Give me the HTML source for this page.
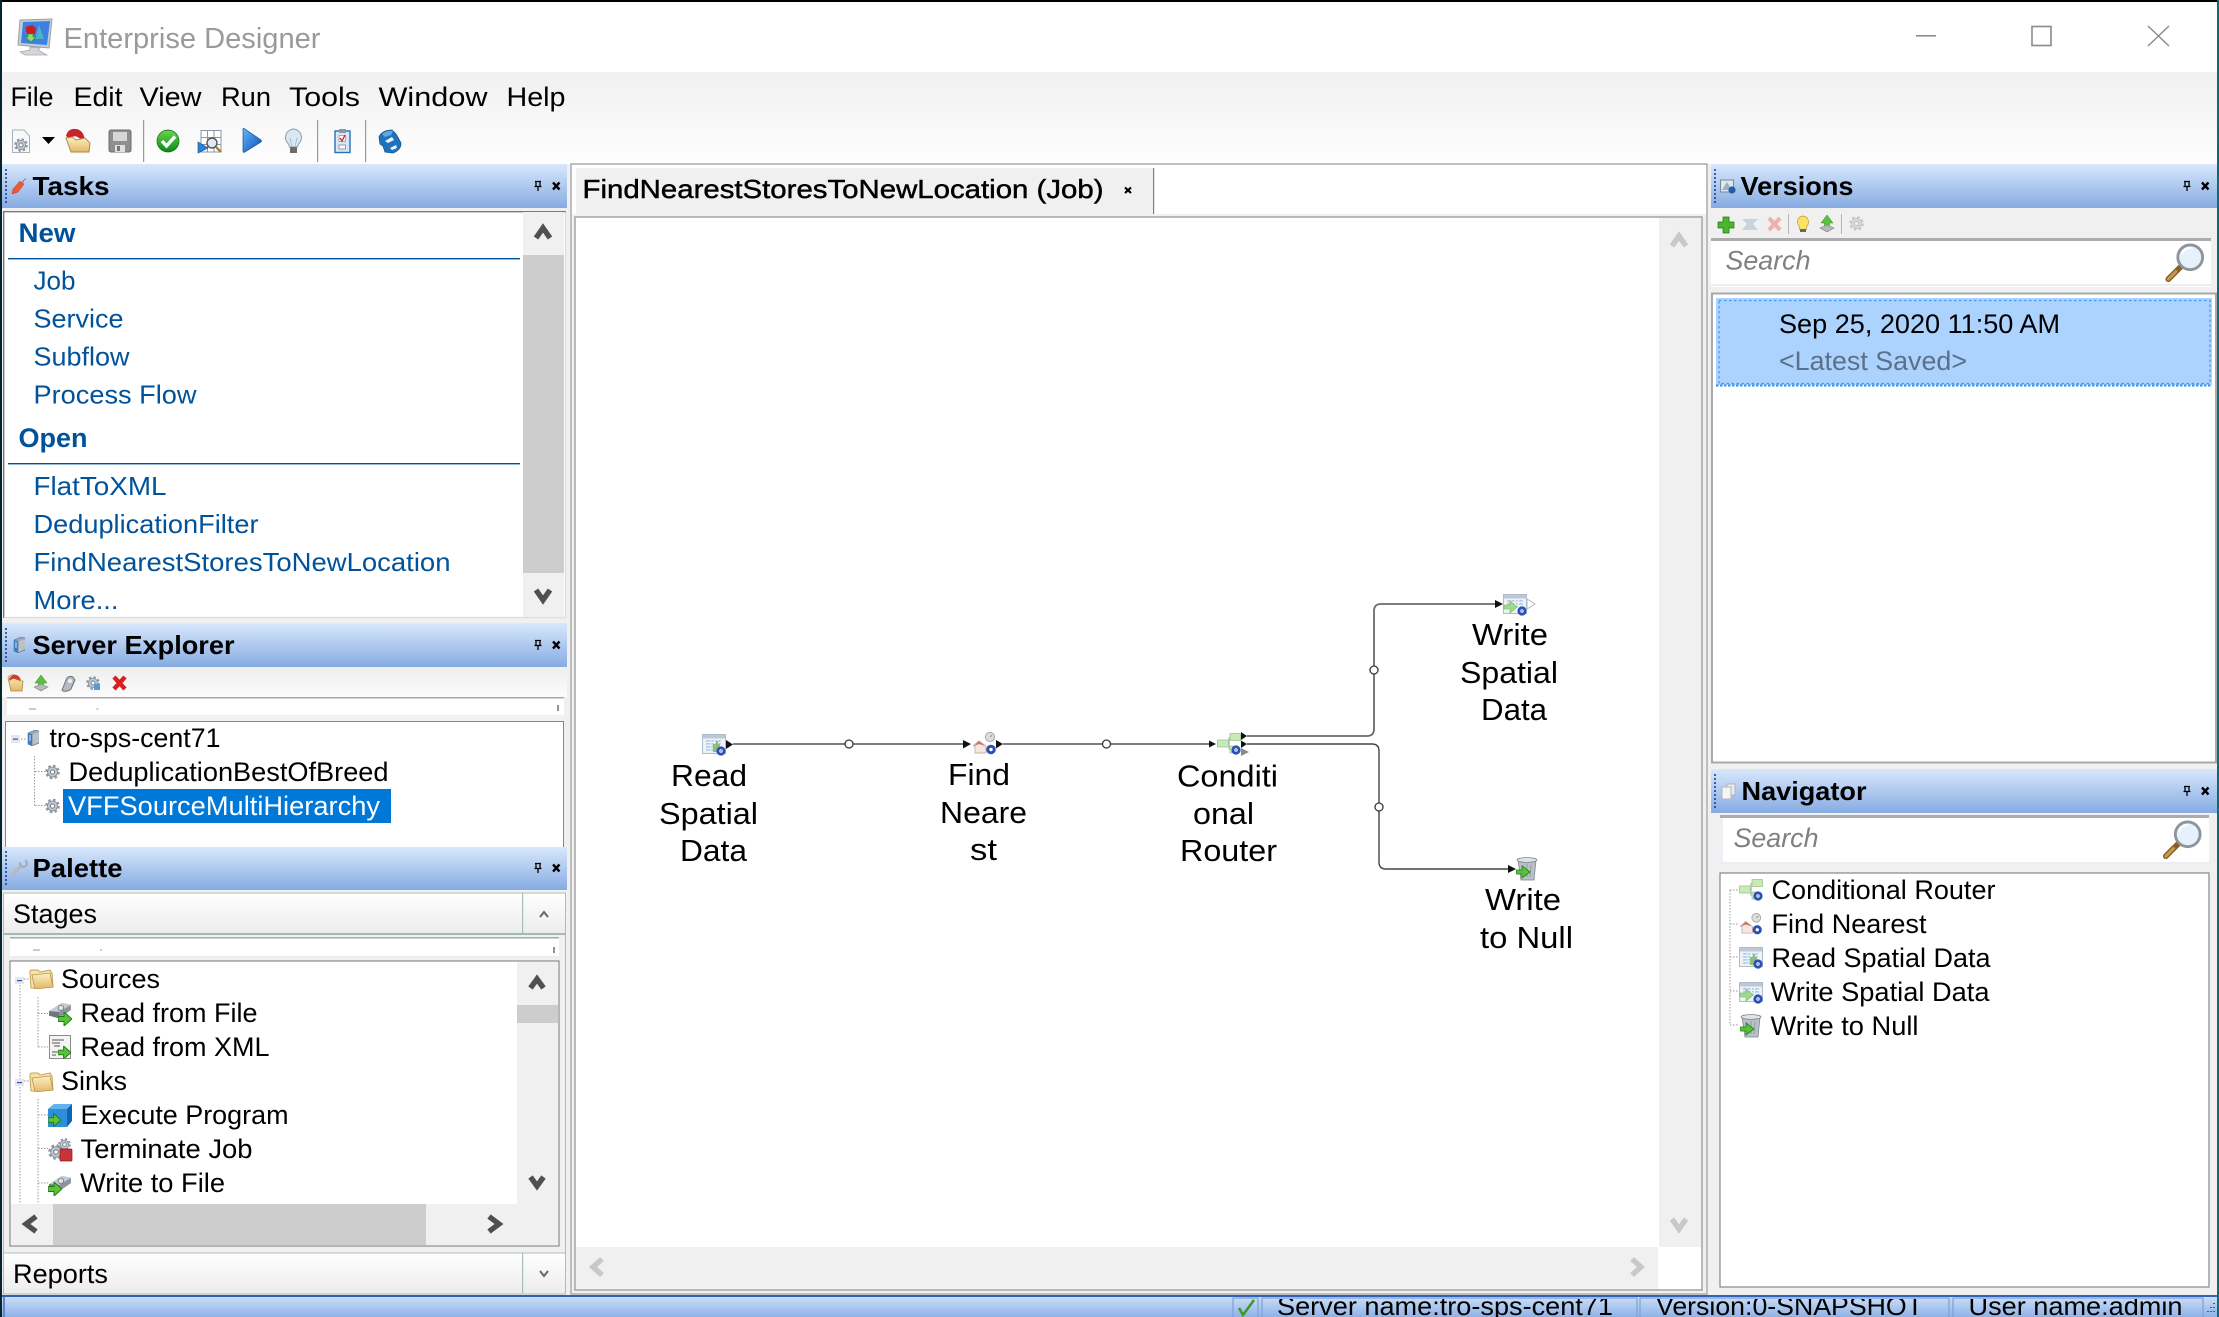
<!DOCTYPE html>
<html><head><meta charset="utf-8"><title>Enterprise Designer</title>
<style>
html,body{margin:0;padding:0;background:#f0f0f0;width:2219px;height:1317px;overflow:hidden}
svg{display:block}
text{font-family:"Liberation Sans",sans-serif;font-size:27px;fill:#000}
.h{font-weight:bold;font-size:26px}
.l{fill:#00529b;font-size:26px}
.lb{fill:#00529b;font-weight:bold;font-size:27px}
.c{font-size:31px}
.s{font-style:italic;fill:#808080;font-size:27px}
</style></head><body>
<svg width="2219" height="1317" viewBox="0 0 2219 1317" xmlns="http://www.w3.org/2000/svg">
<defs>
<linearGradient id="hd" x1="0" y1="0" x2="0" y2="1"><stop offset="0" stop-color="#d8e8fc"/><stop offset="1" stop-color="#86abe2"/></linearGradient>
<linearGradient id="st" x1="0" y1="0" x2="0" y2="1"><stop offset="0" stop-color="#d0e2f9"/><stop offset="1" stop-color="#8fb2e6"/></linearGradient>
<linearGradient id="mn" x1="0" y1="0" x2="0" y2="1"><stop offset="0" stop-color="#f0f0f0"/><stop offset="1" stop-color="#fefefe"/></linearGradient>
<linearGradient id="bt" x1="0" y1="0" x2="0" y2="1"><stop offset="0" stop-color="#ffffff"/><stop offset="1" stop-color="#ececec"/></linearGradient>
<linearGradient id="tb" x1="0" y1="0" x2="0" y2="1"><stop offset="0" stop-color="#eeeeee"/><stop offset="1" stop-color="#fbfbfb"/></linearGradient>
<linearGradient id="fo" x1="0" y1="0" x2="0" y2="1"><stop offset="0" stop-color="#fdf0c4"/><stop offset="1" stop-color="#e2b866"/></linearGradient>
<linearGradient id="gc" x1="0" y1="0" x2="0" y2="1"><stop offset="0" stop-color="#6fd34f"/><stop offset="1" stop-color="#0a8a1a"/></linearGradient>
<linearGradient id="bl" x1="0" y1="0" x2="1" y2="1"><stop offset="0" stop-color="#63b5f5"/><stop offset="1" stop-color="#0d4fb3"/></linearGradient>

<symbol id="gear" viewBox="0 0 16 16"><circle cx="8" cy="8" r="6.3" fill="none" stroke="#8e98a2" stroke-width="3" stroke-dasharray="2.6 2.4"/><circle cx="8" cy="8" r="5.3" fill="#c3cad1" stroke="#8a929b"/><circle cx="8" cy="8" r="2.3" fill="#f4f6f8" stroke="#6d7681"/></symbol>
<symbol id="folder" viewBox="0 0 25 20"><path d="M1 5 L1 3 Q1 1 3 1 L9 1 L11 3 L21 1 L23 4 L24 18 L5 19 L2 19Z" fill="#f7e3a6" stroke="#c2a45d"/><path d="M3 6 L21 4 L24 18 L6 20Z" fill="url(#fo)" stroke="#b8944d" stroke-width=".8"/></symbol>
<symbol id="srv" viewBox="0 0 12 16"><path d="M1 3 L8 0 L12 1 L12 13 L5 16 L1 14Z" fill="#9aa7b5" stroke="#66727e" stroke-width=".6"/><path d="M1 3 L5 4 L5 16 L1 14Z" fill="#3f7cc4"/><path d="M2 6h2M2 8h2M2 10h2" stroke="#cfe4fa"/><path d="M6 4 L12 2 L12 12 L6 15Z" fill="#b9c1c9"/></symbol>
<symbol id="arr" viewBox="0 0 14 14"><path d="M0 4.5 H6 V0 L14 7 L6 14 V9.5 H0Z" fill="#5cc13a" stroke="#1d7d18" stroke-width="1"/></symbol>
<symbol id="disk" viewBox="0 0 24 22"><path d="M0 10 L14 1 L24 3 L24 9 L11 18 L0 15Z" fill="#8c959e"/><path d="M0 10 L14 1 L24 3 L11 11Z" fill="#c5ccd3"/><circle cx="13" cy="6.5" r="3" fill="#dfe3e7" stroke="#767f88"/><path d="M0 10 L11 11 L11 18 L0 15Z" fill="#6e7780"/></symbol>
<symbol id="rsd" viewBox="0 0 24 22"><rect x=".5" y=".5" width="23" height="19" fill="#eef2f6" stroke="#aebccb"/><rect x="1" y="1" width="22" height="3.5" fill="#bcc8d4"/><path d="M4 7h14M4 10h14M4 13h10M4 16h8M6 6v11M10 6v11M14 6v8M18 6v6" stroke="#8fb6e6" stroke-dasharray="1.5 1.5" fill="none"/><path d="M11 10h3v-3h2v3h2v8H11Z" fill="#8dbf77"/><circle cx="19" cy="17" r="4.6" fill="#2b50b8"/><circle cx="19" cy="17" r="1.7" fill="#fff"/><circle cx="19" cy="17" r=".7" fill="#2b50b8"/></symbol>
<symbol id="wsd" viewBox="0 0 24 22"><rect x=".5" y=".5" width="23" height="19" fill="#eef2f6" stroke="#aebccb"/><rect x="1" y="1" width="22" height="3.5" fill="#bcc8d4"/><path d="M4 7h16M4 10h16M6 6v8M10 6v8M14 6v8M18 6v8" stroke="#8fb6e6" stroke-dasharray="1.5 1.5" fill="none"/><path d="M1 11h6v-4l7 6-7 6v-4H1Z" fill="#9edb8b" stroke="#74b563" stroke-width=".6"/><circle cx="19" cy="17" r="4.6" fill="#2b50b8"/><circle cx="19" cy="17" r="1.7" fill="#fff"/><circle cx="19" cy="17" r=".7" fill="#2b50b8"/></symbol>
<symbol id="cr" viewBox="0 0 24 22"><rect x=".5" y="7" width="11" height="7" fill="#c9eab8" stroke="#9cc88a" stroke-width=".8"/><rect x="13" y=".5" width="10.5" height="7" fill="#c9eab8" stroke="#9cc88a" stroke-width=".8"/><path d="M11 10h2M12 4v12h2" stroke="#b3b3b3" fill="none"/><rect x="13" y="13" width="7" height="7" fill="#c9eab8" stroke="#9cc88a" stroke-width=".8"/><circle cx="19" cy="17" r="4.6" fill="#2b50b8"/><circle cx="19" cy="17" r="1.7" fill="#fff"/><circle cx="19" cy="17" r=".7" fill="#2b50b8"/></symbol>
<symbol id="fn" viewBox="0 0 24 23"><circle cx="17" cy="5" r="4.6" fill="#ddd" stroke="#aaa"/><path d="M17 5l2-2" stroke="#999"/><path d="M0 14 L6 9 L13 14 V21 H2 V14Z" fill="#f4e6e2" stroke="#c59a90" stroke-width=".7"/><path d="M1 14 L6 9 L12 14 L6 12Z" fill="#c5776b"/><circle cx="18" cy="17.5" r="4.8" fill="#2b50b8"/><circle cx="18" cy="17.5" r="1.7" fill="#fff"/></symbol>
<symbol id="trash" viewBox="0 0 22 24"><path d="M2 3 L20 3 L18 23 L5 23Z" fill="#b9c1c8" stroke="#7d858d" stroke-width=".8"/><ellipse cx="11" cy="3" rx="10" ry="2.4" fill="#dfe4e8" stroke="#7d858d" stroke-width=".8"/><path d="M7 8l1 12M11 7v13M15 8l-1 12" stroke="#939ba2"/><path d="M0 13h6V9l8 6-8 6v-4H0Z" fill="#5cc13a" stroke="#1d7d18" stroke-width=".8"/></symbol>
<symbol id="mag" viewBox="0 0 42 42"><path d="M4 38 L18 24" stroke="#8b5e22" stroke-width="6" stroke-linecap="round"/><path d="M4 38 L12 30" stroke="#c69a56" stroke-width="3" stroke-linecap="round"/><circle cx="27" cy="15" r="13" fill="#e5f1fb" stroke="#8f9499" stroke-width="3"/><path d="M18 12 A10 10 0 0 1 28 5" stroke="#fff" stroke-width="2" fill="none"/></symbol>
<g id="pinx"><path d="M-3 -4.5h6M-2-4.5v5M2-4.5v5M-3.5 .5h7M0 .5v4.5" stroke="#000" stroke-width="1.3" fill="none"/><path d="M15 -3.5l6.5 7M21.5 -3.5l-6.5 7" stroke="#000" stroke-width="2.4"/></g>
</defs>

<rect width="2219" height="1317" fill="#f0f0f0"/>
<!-- window frame + title -->
<rect x="0" y="0" width="2219" height="72" fill="#fff"/>
<rect x="0" y="0" width="2219" height="2" fill="#000"/>
<rect x="0" y="0" width="2" height="1317" fill="#06242a"/>
<rect x="2217" y="0" width="2" height="1317" fill="#0f6a78"/>
<!-- logo -->
<path d="M20 20 L52 19 L49 48 L18 45Z" fill="#c4ccd4" stroke="#98a0a8"/>
<path d="M23 22 L50 21 L47 45 L21 43Z" fill="#3d7fe2"/>
<path d="M26 27 L32 25 L36 28 L35 34 L29 36 L26 32Z" fill="#c81e23"/>
<path d="M39 25 L44 39 L35 39Z" fill="#4ab3c8"/>
<path d="M28 34 h5 v3 h3 l-5 5 -6-5 h3Z" fill="#8ddc6e" stroke="#2f8b2a" stroke-width=".6"/>
<path d="M30 47 L40 48 L38 50 L47 55 L25 55 L20 52 L30 50Z" fill="#d4d7da" stroke="#a6abb0" stroke-width=".8"/>
<text x="63.5" y="48" style="font-size:29px;fill:#9a9a9a" textLength="257" lengthAdjust="spacingAndGlyphs">Enterprise Designer</text>
<rect x="1916" y="35" width="20" height="1.6" fill="#8a8a8a"/>
<rect x="2032" y="26.5" width="19" height="19" fill="none" stroke="#8a8a8a" stroke-width="1.6"/>
<path d="M2148 26 L2169 46 M2169 26 L2148 46" stroke="#8a8a8a" stroke-width="1.4"/>

<!-- menu -->
<rect x="2" y="72" width="2215" height="92" fill="url(#mn)"/>
<text x="10.5" y="106" textLength="43" lengthAdjust="spacingAndGlyphs">File</text>
<text x="73.5" y="106" textLength="49" lengthAdjust="spacingAndGlyphs">Edit</text>
<text x="139.5" y="106" textLength="62" lengthAdjust="spacingAndGlyphs">View</text>
<text x="221" y="106" textLength="50" lengthAdjust="spacingAndGlyphs">Run</text>
<text x="289" y="106" textLength="71" lengthAdjust="spacingAndGlyphs">Tools</text>
<text x="378.5" y="106" textLength="109" lengthAdjust="spacingAndGlyphs">Window</text>
<text x="506.5" y="106" textLength="59" lengthAdjust="spacingAndGlyphs">Help</text>

<!-- toolbar -->
<path d="M12.5 130 H24 L29.5 136 V152.5 H12.5Z" fill="#f6f8fa" stroke="#a9b0b8"/>
<use href="#gear" x="14" y="138" width="14" height="14"/>
<path d="M42 137 H55 L48.5 144Z" fill="#000"/>
<path d="M66 136 Q68 128 76 129 Q84 130 85 141 L79 138 Q74 134 70 139Z" fill="#c9242b"/>
<path d="M66 138 L72 137 L76 140 L85 138 L90 143 L89 152 L71 152Z" fill="url(#fo)" stroke="#a98a45"/>
<rect x="109" y="130" width="22" height="22" rx="2" fill="#8e8e8e" stroke="#6f6f6f"/>
<rect x="113" y="132" width="14" height="9" fill="#d6d6d6"/><rect x="115" y="145" width="10" height="7" fill="#e0e0e0"/><rect x="117" y="146" width="3" height="5" fill="#777"/>
<rect x="143" y="120" width="1.2" height="42" fill="#9a9a9a"/>
<circle cx="168" cy="141" r="11" fill="url(#gc)" stroke="#0b6a12" stroke-width=".7"/>
<path d="M162 141 L166.5 146 L175 136.5" stroke="#fff" stroke-width="3.4" fill="none"/>
<path d="M201 130.5 H221 V152 H201Z M207.5 130.5 V152 M214 130.5 V152 M201 137.5 H221 M201 144.5 H221" fill="#fff" stroke="#8a97a6"/>
<path d="M198 142 L208 148 L198 153Z" fill="#2a83d3" stroke="#154c86" stroke-width=".6"/>
<circle cx="212" cy="143" r="5" fill="#dcebf7" stroke="#555" stroke-width="1.4"/><path d="M216 147 L221 152" stroke="#a5762e" stroke-width="2.2"/>
<path d="M243 129 Q243 128 245 129 L261 140 Q262 141 261 142 L245 152 Q243 153 243 151Z" fill="url(#bl)" stroke="#164f9e" stroke-width=".7"/>
<path d="M293.5 129 a8.5 8.5 0 0 1 5 15 l-1 3 h-8 l-1-3 a8.5 8.5 0 0 1 5-15Z" fill="#dbe8f3" stroke="#8b9eb1"/><path d="M290 138 l2 9 M297 138 l-2 9" stroke="#a2b3c4" stroke-width=".8"/><rect x="290" y="147" width="7" height="6" fill="#6b6b6b"/>
<rect x="317" y="120" width="1.2" height="42" fill="#9a9a9a"/>
<rect x="335" y="131" width="15" height="21.5" fill="#d8e6f5" stroke="#2c6fb8" stroke-width="1.4"/>
<rect x="339" y="129" width="7" height="4" fill="#8a97a6"/>
<rect x="339" y="135.5" width="6.5" height="6" fill="#fff" stroke="#777" stroke-width=".6"/><path d="M340 138 l2 3 l3-6" stroke="#c8232a" stroke-width="1.3" fill="none"/>
<rect x="339" y="145" width="6.5" height="4" fill="#fff" stroke="#777" stroke-width=".7"/>
<rect x="365" y="120" width="1.2" height="42" fill="#9a9a9a"/>
<path d="M379 137 Q382 130 392 130 L396 134 L401 143 Q401 150 393 153 L385 152 L383 146 L380 144Z" fill="#1d73bd" stroke="#11558f" stroke-width=".8"/>
<path d="M382 134 Q387 130 393 131 L391 135 L385 137Z" fill="#5fa9e2"/>
<path d="M385 141 l7-4 l2 3 l-6 3Z M390 148 l6-3 l1 3 l-5 2Z" fill="#eef6fd"/>

<!-- ============ LEFT: Tasks ============ -->
<rect x="2" y="164" width="565" height="44" fill="url(#hd)"/>
<path d="M6 169 V203" stroke="#1d3f8f" stroke-width="1.6" stroke-dasharray="2 2"/>
<path d="M26 178 L21 183 L20 181 L13 189 L12 194 L18 192 L24 184 L22 183Z" fill="#ee5a33" stroke="#b23a20" stroke-width=".5"/>
<text class="h" x="32.5" y="195" textLength="77" lengthAdjust="spacingAndGlyphs">Tasks</text>
<use href="#pinx" x="538" y="186"/>

<rect x="3" y="211" width="563" height="407" fill="#fff"/>
<path d="M3.7 618 V211.7 H566" fill="none" stroke="#7a7a7a" stroke-width="1.4"/>
<path d="M565.5 212 V617.5 H4" fill="none" stroke="#dcdcdc" stroke-width="1.2"/>
<rect x="523" y="212" width="41" height="405" fill="#f0f0f0"/>
<rect x="523" y="255" width="41" height="318" fill="#cdcdcd"/>
<path d="M536 238 L543 228 L550 238" fill="none" stroke="#505050" stroke-width="5.4"/>
<path d="M536 590 L543 600 L550 590" fill="none" stroke="#505050" stroke-width="5.4"/>
<text class="lb" x="18.5" y="242" textLength="57" lengthAdjust="spacingAndGlyphs">New</text>
<rect x="8" y="258" width="512" height="1.4" fill="#00529b"/>
<text class="l" x="33.5" y="289.5" textLength="42" lengthAdjust="spacingAndGlyphs">Job</text>
<text class="l" x="33.5" y="327.5" textLength="90" lengthAdjust="spacingAndGlyphs">Service</text>
<text class="l" x="33.5" y="365.5" textLength="96" lengthAdjust="spacingAndGlyphs">Subflow</text>
<text class="l" x="33.5" y="403.5" textLength="163" lengthAdjust="spacingAndGlyphs">Process Flow</text>
<text class="lb" x="18.5" y="447" textLength="69" lengthAdjust="spacingAndGlyphs">Open</text>
<rect x="8" y="463" width="512" height="1.4" fill="#00529b"/>
<text class="l" x="33.5" y="495" textLength="133" lengthAdjust="spacingAndGlyphs">FlatToXML</text>
<text class="l" x="33.5" y="533" textLength="225" lengthAdjust="spacingAndGlyphs">DeduplicationFilter</text>
<text class="l" x="33.5" y="571" textLength="417" lengthAdjust="spacingAndGlyphs">FindNearestStoresToNewLocation</text>
<text class="l" x="33.5" y="609" textLength="85" lengthAdjust="spacingAndGlyphs">More...</text>

<!-- ============ Server Explorer ============ -->
<rect x="2" y="623" width="565" height="44" fill="url(#hd)"/>
<path d="M6 628 V662" stroke="#1d3f8f" stroke-width="1.6" stroke-dasharray="2 2"/>
<use href="#srv" x="13" y="637" width="12" height="16"/>
<text class="h" x="32.5" y="654" textLength="202" lengthAdjust="spacingAndGlyphs">Server Explorer</text>
<use href="#pinx" x="538" y="645"/>
<rect x="2" y="667" width="565" height="30" fill="url(#tb)"/>
<path d="M8 678 Q10 674 15 675 Q20 676 21 681 L23 681 L22 691 L11 691Z" fill="url(#fo)" stroke="#a98a45" stroke-width=".8"/>
<path d="M9 679 Q12 674 16 675 Q20 676 20 681 L15 679 Q12 678 10 681Z" fill="#d8352c"/>
<path d="M41 675 L47 683 H43.5 V688 H38.5 V683 H35Z" fill="#59c13b" stroke="#2e8a22" stroke-width=".5"/>
<path d="M34 687 L41 684 L48 687 L41 691Z" fill="#b4b9be" stroke="#7f858b" stroke-width=".6"/>
<path d="M62 690 L66 680 Q68 675 73 677 L75 680 L71 689 Q68 692 63 691Z" fill="#b5bbc2" stroke="#6d747b"/><circle cx="70" cy="681" r="2" fill="#f0f0f0"/>
<use href="#gear" x="86" y="676" width="14" height="14"/><path d="M94 684 h6 v6 h-6Z" fill="#5a9ad8"/>
<path d="M114 677 L125 689 M125 677 L114 689" stroke="#d8201f" stroke-width="4.4"/>

<rect x="5" y="697" width="559" height="20" fill="#fff"/>
<rect x="5" y="697" width="559" height="1.5" fill="#a9a9a9"/>
<rect x="5" y="697" width="2" height="18" fill="#ededed"/><rect x="5" y="715" width="559" height="1.5" fill="#ececf2"/>
<rect x="29" y="708.5" width="7" height="1" fill="#999"/><rect x="96.5" y="708.5" width="2" height="1" fill="#999"/>
<path d="M558 705 v6" stroke="#666" stroke-width="1.4"/>

<rect x="5.5" y="721.5" width="558" height="140" fill="#fff" stroke="#828790"/>
<rect x="11" y="735" width="9" height="8" fill="#e3e8ef"/><rect x="13" y="738.5" width="5" height="1.2" fill="#33569e"/>
<path d="M21 739 H27" stroke="#999" stroke-dasharray="1.5 1.5"/>
<use href="#srv" x="27" y="730" width="12" height="16"/>
<text x="49.5" y="747" textLength="171" lengthAdjust="spacingAndGlyphs">tro-sps-cent71</text>
<path d="M34.5 756 V805.5 M35 771.5 H45 M35 805.5 H45" stroke="#999" fill="none" stroke-dasharray="1.5 1.5"/>
<use href="#gear" x="45" y="764" width="15" height="16"/>
<text x="68.5" y="781" textLength="320" lengthAdjust="spacingAndGlyphs">DeduplicationBestOfBreed</text>
<use href="#gear" x="45" y="798" width="15" height="16"/>
<rect x="63" y="789" width="328" height="34" fill="#0078d7"/>
<text x="68" y="815" style="fill:#fff" textLength="312" lengthAdjust="spacingAndGlyphs">VFFSourceMultiHierarchy</text>

<!-- ============ Palette ============ -->
<rect x="2" y="847" width="565" height="43" fill="url(#hd)"/>
<path d="M6 851 V885" stroke="#1d3f8f" stroke-width="1.6" stroke-dasharray="2 2"/>
<path d="M12 875 L22 865" stroke="#b5bac0" stroke-width="3.4"/><circle cx="23.5" cy="863.5" r="3.5" fill="none" stroke="#a4aab0" stroke-width="2" stroke-dasharray="12 6"/>
<text class="h" x="32.5" y="877" textLength="90" lengthAdjust="spacingAndGlyphs">Palette</text>
<use href="#pinx" x="538" y="868"/>

<rect x="3.5" y="893" width="562" height="41" fill="url(#bt)" stroke="#a6bfba"/>
<rect x="522" y="893" width="1.2" height="40" fill="#a6bfba"/>
<rect x="3" y="933" width="563" height="2" fill="#9fbdb8"/>
<text x="13" y="923" textLength="84" lengthAdjust="spacingAndGlyphs">Stages</text>
<path d="M540 917 L544 912 L548 917" fill="none" stroke="#666" stroke-width="2"/>
<rect x="3" y="935" width="563" height="318" fill="#f0f0f0"/>
<path d="M3.5 935 V1253 M565.5 935 V1253" stroke="#a6bfba"/>
<rect x="10" y="937" width="549" height="20" fill="#fff"/>
<rect x="10" y="937" width="549" height="1.5" fill="#a9a9a9"/>
<rect x="10" y="956" width="549" height="1.5" fill="#ececf2"/>
<rect x="33" y="949.5" width="7" height="1" fill="#999"/><rect x="100" y="949.5" width="2" height="1" fill="#999"/>
<path d="M554 947 v6" stroke="#666" stroke-width="1.4"/>

<rect x="10" y="961" width="549" height="285" fill="#fff" stroke="#8a8a8a" stroke-width="1.2"/>
<rect x="517" y="962" width="41" height="242" fill="#f0f0f0"/>
<rect x="517" y="1005" width="41" height="18" fill="#cdcdcd"/>
<path d="M530.5 988 L537 979 L543.5 988" fill="none" stroke="#505050" stroke-width="5.4"/>
<path d="M530.5 1177 L537 1186 L543.5 1177" fill="none" stroke="#505050" stroke-width="5.4"/>
<rect x="11" y="1204" width="547" height="41" fill="#f0f0f0"/>
<rect x="53" y="1204" width="373" height="41" fill="#cdcdcd"/>
<path d="M36 1216.5 L26 1224 L36 1231.5" fill="none" stroke="#505050" stroke-width="5.4"/>
<path d="M489 1216.5 L499 1224 L489 1231.5" fill="none" stroke="#505050" stroke-width="5.4"/>
<path d="M20 985 V1203 M38 997 V1047 M38 1013.5 H48 M38 1047 H48 M38 1099 V1203 M38 1115 H48 M38 1148.5 H48 M38 1183 H48 M24 979 H29 M24 1081 H29" stroke="#999" fill="none" stroke-dasharray="1.5 1.5"/>
<rect x="15" y="977" width="9" height="7" fill="#e3e8ef"/><rect x="17" y="980" width="5" height="1.2" fill="#33569e"/>
<rect x="15" y="1079" width="9" height="7" fill="#e3e8ef"/><rect x="17" y="1082" width="5" height="1.2" fill="#33569e"/>
<use href="#folder" x="29" y="969" width="25" height="20"/>
<text x="61" y="988" textLength="99" lengthAdjust="spacingAndGlyphs">Sources</text>
<use href="#disk" x="48" y="1002" width="24" height="20"/><use href="#arr" x="58" y="1012" width="14" height="14"/>
<text x="80.5" y="1022" textLength="177" lengthAdjust="spacingAndGlyphs">Read from File</text>
<rect x="49.5" y="1035.5" width="21" height="23" fill="#f4f4f4" stroke="#8b8b8b"/><path d="M52 1040h12M52 1043h8M54 1046h6M52 1052h6M52 1055h4" stroke="#555"/><use href="#arr" x="58" y="1046" width="13" height="13"/>
<text x="80.5" y="1056" textLength="189" lengthAdjust="spacingAndGlyphs">Read from XML</text>
<use href="#folder" x="29" y="1072" width="25" height="20"/>
<text x="61" y="1090" textLength="66" lengthAdjust="spacingAndGlyphs">Sinks</text>
<path d="M48 1109 L54 1104 L72 1104 L72 1121 L67 1127 L48 1127Z" fill="#0f64b5"/><path d="M48 1109 L54 1104 L72 1104 L67 1109Z" fill="#5fb4ee"/><rect x="48" y="1109" width="19" height="18" fill="#2e8ed8"/>
<use href="#arr" x="48" y="1113" width="13" height="14"/>
<text x="80.5" y="1124" textLength="208" lengthAdjust="spacingAndGlyphs">Execute Program</text>
<use href="#gear" x="48" y="1144" width="16" height="16"/><use href="#gear" x="58" y="1138" width="13" height="13"/>
<rect x="60" y="1149" width="12" height="12" rx="1" fill="#c9343a" stroke="#8f1b1b" stroke-width=".7"/>
<text x="80.5" y="1158" textLength="172" lengthAdjust="spacingAndGlyphs">Terminate Job</text>
<use href="#disk" x="48" y="1175" width="24" height="20"/><use href="#arr" x="48" y="1182" width="14" height="14"/>
<text x="80" y="1192" textLength="145" lengthAdjust="spacingAndGlyphs">Write to File</text>

<rect x="3.5" y="1253" width="562" height="41" fill="url(#bt)" stroke="#a6bfba"/>
<rect x="522" y="1253" width="1.2" height="40" fill="#a6bfba"/>
<text x="13" y="1283" textLength="95" lengthAdjust="spacingAndGlyphs">Reports</text>
<path d="M540 1271 L544 1276 L548 1271" fill="none" stroke="#666" stroke-width="2"/>

<!-- ============ CENTER ============ -->
<rect x="571" y="164" width="1136" height="1130" fill="#f0f0f0" stroke="#a8a8a8" stroke-width="1.4"/>
<rect x="572" y="165" width="1134" height="49" fill="#fff"/>
<rect x="576" y="168" width="577" height="46" fill="#f0f0f0"/>
<rect x="1153" y="168" width="1.2" height="46" fill="#7f7f7f"/>
<text x="582.5" y="198" style="font-size:26px;stroke:#000;stroke-width:.45" textLength="521" lengthAdjust="spacingAndGlyphs">FindNearestStoresToNewLocation (Job)</text>
<path d="M1125 187.5 l6 5.5 M1131 187.5 l-6 5.5" stroke="#000" stroke-width="2.2"/>
<rect x="575" y="217" width="1127" height="1073" fill="#fff" stroke="#a8a8a8" stroke-width="1.6"/>
<rect x="1659" y="218" width="42" height="1029" fill="#f0f0f0"/>
<rect x="576" y="1247" width="1082" height="42" fill="#f0f0f0"/>
<rect x="1659" y="1247" width="42" height="42" fill="#fff"/>
<path d="M1672 246 L1679 236 L1686 246" fill="none" stroke="#c8c8c8" stroke-width="5.4"/>
<path d="M1672 1219 L1679 1229 L1686 1219" fill="none" stroke="#c8c8c8" stroke-width="5.4"/>
<path d="M602 1259 L593 1267 L602 1275" fill="none" stroke="#c8c8c8" stroke-width="5.4"/>
<path d="M1632 1259 L1641 1267 L1632 1275" fill="none" stroke="#c8c8c8" stroke-width="5.4"/>

<!-- canvas -->
<g fill="none" stroke="#6b6b6b" stroke-width="1.8">
<path d="M733 744 H963"/>
<path d="M1003 744 H1209"/>
<path d="M1247 736 H1367 Q1374 736 1374 729 V611 Q1374 604 1381 604 H1495"/>
<path d="M1247 744 H1372 Q1379 744 1379 751 V862 Q1379 869 1386 869 H1508" stroke="#444" stroke-width="1.4"/>
</g>
<g fill="#fff" stroke="#3a3a3a" stroke-width="1.3">
<circle cx="849" cy="744" r="4"/><circle cx="1106.5" cy="744" r="4"/><circle cx="1374" cy="670" r="4"/><circle cx="1379" cy="807" r="4"/>
</g>
<g fill="#111">
<path d="M726 740 L733 744.5 L726 749Z"/>
<path d="M963 740 L971 744 L963 748.5Z"/>
<path d="M996 740 L1003 744 L996 748.5Z"/>
<path d="M1209 740.5 L1216 744 L1209 747.5Z"/>
<path d="M1241 732 L1247 736 L1241 740Z"/>
<path d="M1241 740.5 L1247 744 L1241 748Z"/>
<path d="M1495 600 L1503 604 L1495 608Z"/>
<path d="M1508 865 L1516 869 L1508 873Z"/>
</g>
<path d="M1241 748 L1249 752 L1241 756Z" fill="#8a8a8a"/>
<path d="M1527 599 L1535 604 L1527 609Z" fill="#fff" stroke="#b5b5b5"/>
<use href="#rsd" x="702" y="734" width="24" height="22"/>
<use href="#fn" x="973" y="732" width="24" height="23"/>
<use href="#cr" x="1217" y="733" width="24" height="22"/>
<use href="#wsd" x="1503" y="594" width="24" height="22"/>
<use href="#trash" x="1516" y="857" width="22" height="24"/>
<text class="c" x="671" y="786" textLength="76" lengthAdjust="spacingAndGlyphs">Read</text>
<text class="c" x="659" y="824" textLength="99" lengthAdjust="spacingAndGlyphs">Spatial</text>
<text class="c" x="680" y="861" textLength="67" lengthAdjust="spacingAndGlyphs">Data</text>
<text class="c" x="948" y="785" textLength="62" lengthAdjust="spacingAndGlyphs">Find</text>
<text class="c" x="940" y="823" textLength="87" lengthAdjust="spacingAndGlyphs">Neare</text>
<text class="c" x="970" y="860" textLength="27" lengthAdjust="spacingAndGlyphs">st</text>
<text class="c" x="1177" y="786.5" textLength="101" lengthAdjust="spacingAndGlyphs">Conditi</text>
<text class="c" x="1193" y="824" textLength="61" lengthAdjust="spacingAndGlyphs">onal</text>
<text class="c" x="1180" y="861" textLength="97" lengthAdjust="spacingAndGlyphs">Router</text>
<text class="c" x="1472" y="645" textLength="76" lengthAdjust="spacingAndGlyphs">Write</text>
<text class="c" x="1460" y="683" textLength="98" lengthAdjust="spacingAndGlyphs">Spatial</text>
<text class="c" x="1481" y="720" textLength="66" lengthAdjust="spacingAndGlyphs">Data</text>
<text class="c" x="1485" y="910" textLength="76" lengthAdjust="spacingAndGlyphs">Write</text>
<text class="c" x="1480" y="948" textLength="93" lengthAdjust="spacingAndGlyphs">to Null</text>

<!-- ============ RIGHT: Versions ============ -->
<rect x="1711" y="164" width="506" height="44" fill="url(#hd)"/>
<path d="M1715 169 V203" stroke="#1d3f8f" stroke-width="1.6" stroke-dasharray="2 2"/>
<rect x="1720.5" y="180" width="13" height="12" fill="#dfe7ee" stroke="#7a8794"/><path d="M1722 190 L1727 182 L1732 190" fill="#9fb0c0"/><circle cx="1732" cy="190" r="3.6" fill="#1f5fa8"/>
<text class="h" x="1740.5" y="195" textLength="113" lengthAdjust="spacingAndGlyphs">Versions</text>
<use href="#pinx" x="2187" y="186"/>
<path d="M1723 217 h6 v5 h5 v6 h-5 v5 h-6 v-5 h-5 v-6 h5Z" fill="#4cb52e" stroke="#1c7a15" stroke-width=".7"/>
<path d="M1742 219 H1758 L1753 224 L1758 230 H1742 L1747 224Z" fill="#c5d4df"/>
<path d="M1769 218 L1780 230 M1780 218 L1769 230" stroke="#eeb1b1" stroke-width="4.2"/>
<rect x="1788" y="214" width="1" height="20" fill="#b5b5b5"/>
<path d="M1803 216 a6 6 0 0 1 3.5 10.5 v3 h-7 v-3 a6 6 0 0 1 3.5-10.5Z" fill="#fbe365" stroke="#b89f2f" stroke-width=".7"/><rect x="1800" y="229" width="6" height="3" fill="#666"/>
<path d="M1827 215 L1833 223 H1829.5 V228 H1824.5 V223 H1821Z" fill="#59c13b" stroke="#2e8a22" stroke-width=".5"/>
<path d="M1820 228 L1827 225 L1834 228 L1827 232Z" fill="#b4b9be" stroke="#7f858b" stroke-width=".6"/>
<rect x="1841" y="214" width="1" height="20" fill="#b5b5b5"/>
<g opacity=".45"><use href="#gear" x="1849" y="216" width="15" height="15"/></g>

<rect x="1711" y="238" width="500" height="49" fill="#fff"/>
<rect x="1711" y="238" width="500" height="3" fill="#ababb0"/>
<rect x="1711" y="284" width="500" height="2" fill="#ebedf2"/>
<text class="s" x="1725.5" y="269.5" textLength="85" lengthAdjust="spacingAndGlyphs">Search</text>
<use href="#mag" x="2164" y="243" width="41" height="40"/>

<rect x="1712" y="293.5" width="504" height="469" fill="#fff" stroke="#aaaaaa" stroke-width="2"/>
<rect x="1716" y="298" width="496" height="87" fill="#acd3fd"/>
<rect x="1719" y="300.5" width="491" height="83" fill="none" stroke="#3a9bf2" stroke-width="1.2" stroke-dasharray="2.5 2.5"/>
<path d="M1716 385.5 H2212" stroke="#2d90ec" stroke-width="2" stroke-dasharray="2.5 1.5"/>
<text x="1779" y="333" textLength="281" lengthAdjust="spacingAndGlyphs">Sep 25, 2020 11:50 AM</text>
<text x="1779" y="370" style="fill:#5c7188" textLength="188" lengthAdjust="spacingAndGlyphs">&lt;Latest Saved&gt;</text>

<!-- Navigator -->
<rect x="1711" y="769" width="506" height="44" fill="url(#hd)"/>
<path d="M1715 774 V808" stroke="#1d3f8f" stroke-width="1.6" stroke-dasharray="2 2"/>
<rect x="1727" y="784" width="8" height="11" fill="#e9ebee" stroke="#b3b6ba"/><rect x="1722" y="787" width="9" height="12" fill="#f4f5f6" stroke="#b3b6ba"/>
<text class="h" x="1741.5" y="800" textLength="125" lengthAdjust="spacingAndGlyphs">Navigator</text>
<use href="#pinx" x="2187" y="791"/>
<rect x="1720" y="815" width="489" height="49" fill="#fff"/>
<rect x="1720" y="815" width="489" height="3" fill="#ababb0"/>
<rect x="1720" y="818" width="3" height="46" fill="#eef0f5"/>
<rect x="1720" y="862" width="489" height="2" fill="#ebedf2"/>
<text class="s" x="1733.5" y="847" textLength="85" lengthAdjust="spacingAndGlyphs">Search</text>
<use href="#mag" x="2162" y="820" width="40" height="40"/>

<rect x="1720" y="873" width="489" height="414" fill="#fff" stroke="#828790" stroke-width="1.2"/>
<path d="M1730 890 V1025 M1730 890 H1738 M1730 924 H1738 M1730 957 H1738 M1730 991 H1738 M1730 1025 H1738" stroke="#999" fill="none" stroke-dasharray="1.5 1.5"/>
<use href="#cr" x="1739" y="879" width="24" height="22"/>
<use href="#fn" x="1740" y="913" width="23" height="22"/>
<use href="#rsd" x="1739" y="947" width="24" height="22"/>
<use href="#wsd" x="1739" y="982" width="24" height="22"/>
<use href="#trash" x="1740" y="1014" width="22" height="24"/>
<text x="1771.5" y="899" textLength="224" lengthAdjust="spacingAndGlyphs">Conditional Router</text>
<text x="1771.5" y="933" textLength="155" lengthAdjust="spacingAndGlyphs">Find Nearest</text>
<text x="1771.5" y="967" textLength="219" lengthAdjust="spacingAndGlyphs">Read Spatial Data</text>
<text x="1770.5" y="1001" textLength="219" lengthAdjust="spacingAndGlyphs">Write Spatial Data</text>
<text x="1770.5" y="1035" textLength="148" lengthAdjust="spacingAndGlyphs">Write to Null</text>

<!-- ============ STATUS ============ -->
<rect x="2" y="1295" width="2215" height="22" fill="url(#st)"/>
<rect x="2" y="1295" width="2215" height="2" fill="#2f62b4"/>
<rect x="3" y="1297" width="2" height="20" fill="#5d88cf"/>
<g fill="none" stroke="#7d9fd8" stroke-width="1.2">
<rect x="1233" y="1298" width="25" height="22"/>
<rect x="1262" y="1298" width="375" height="22"/>
<rect x="1640" y="1298" width="309" height="22"/>
<rect x="1953" y="1298" width="250" height="22"/>
</g>
<path d="M1239 1308 L1243 1315 L1254 1300" fill="none" stroke="#3d9a24" stroke-width="2.6"/>
<svg x="1262" y="1299" width="955" height="18" viewBox="1262 1299 955 18">
<text x="1277" y="1315" style="font-size:26px" textLength="336" lengthAdjust="spacingAndGlyphs">Server name:tro-sps-cent71</text>
<text x="1656" y="1315" style="font-size:26px" textLength="267" lengthAdjust="spacingAndGlyphs">Version:0-SNAPSHOT</text>
<text x="1968.5" y="1315" style="font-size:26px" textLength="214" lengthAdjust="spacingAndGlyphs">User name:admin</text>
</svg>
<path d="M2214 1303v1M2211 1307v1M2214 1307v1M2208 1311v1M2211 1311v1M2214 1311v1" stroke="#3f5f8f" stroke-width="2"/>
</svg>
</body></html>
